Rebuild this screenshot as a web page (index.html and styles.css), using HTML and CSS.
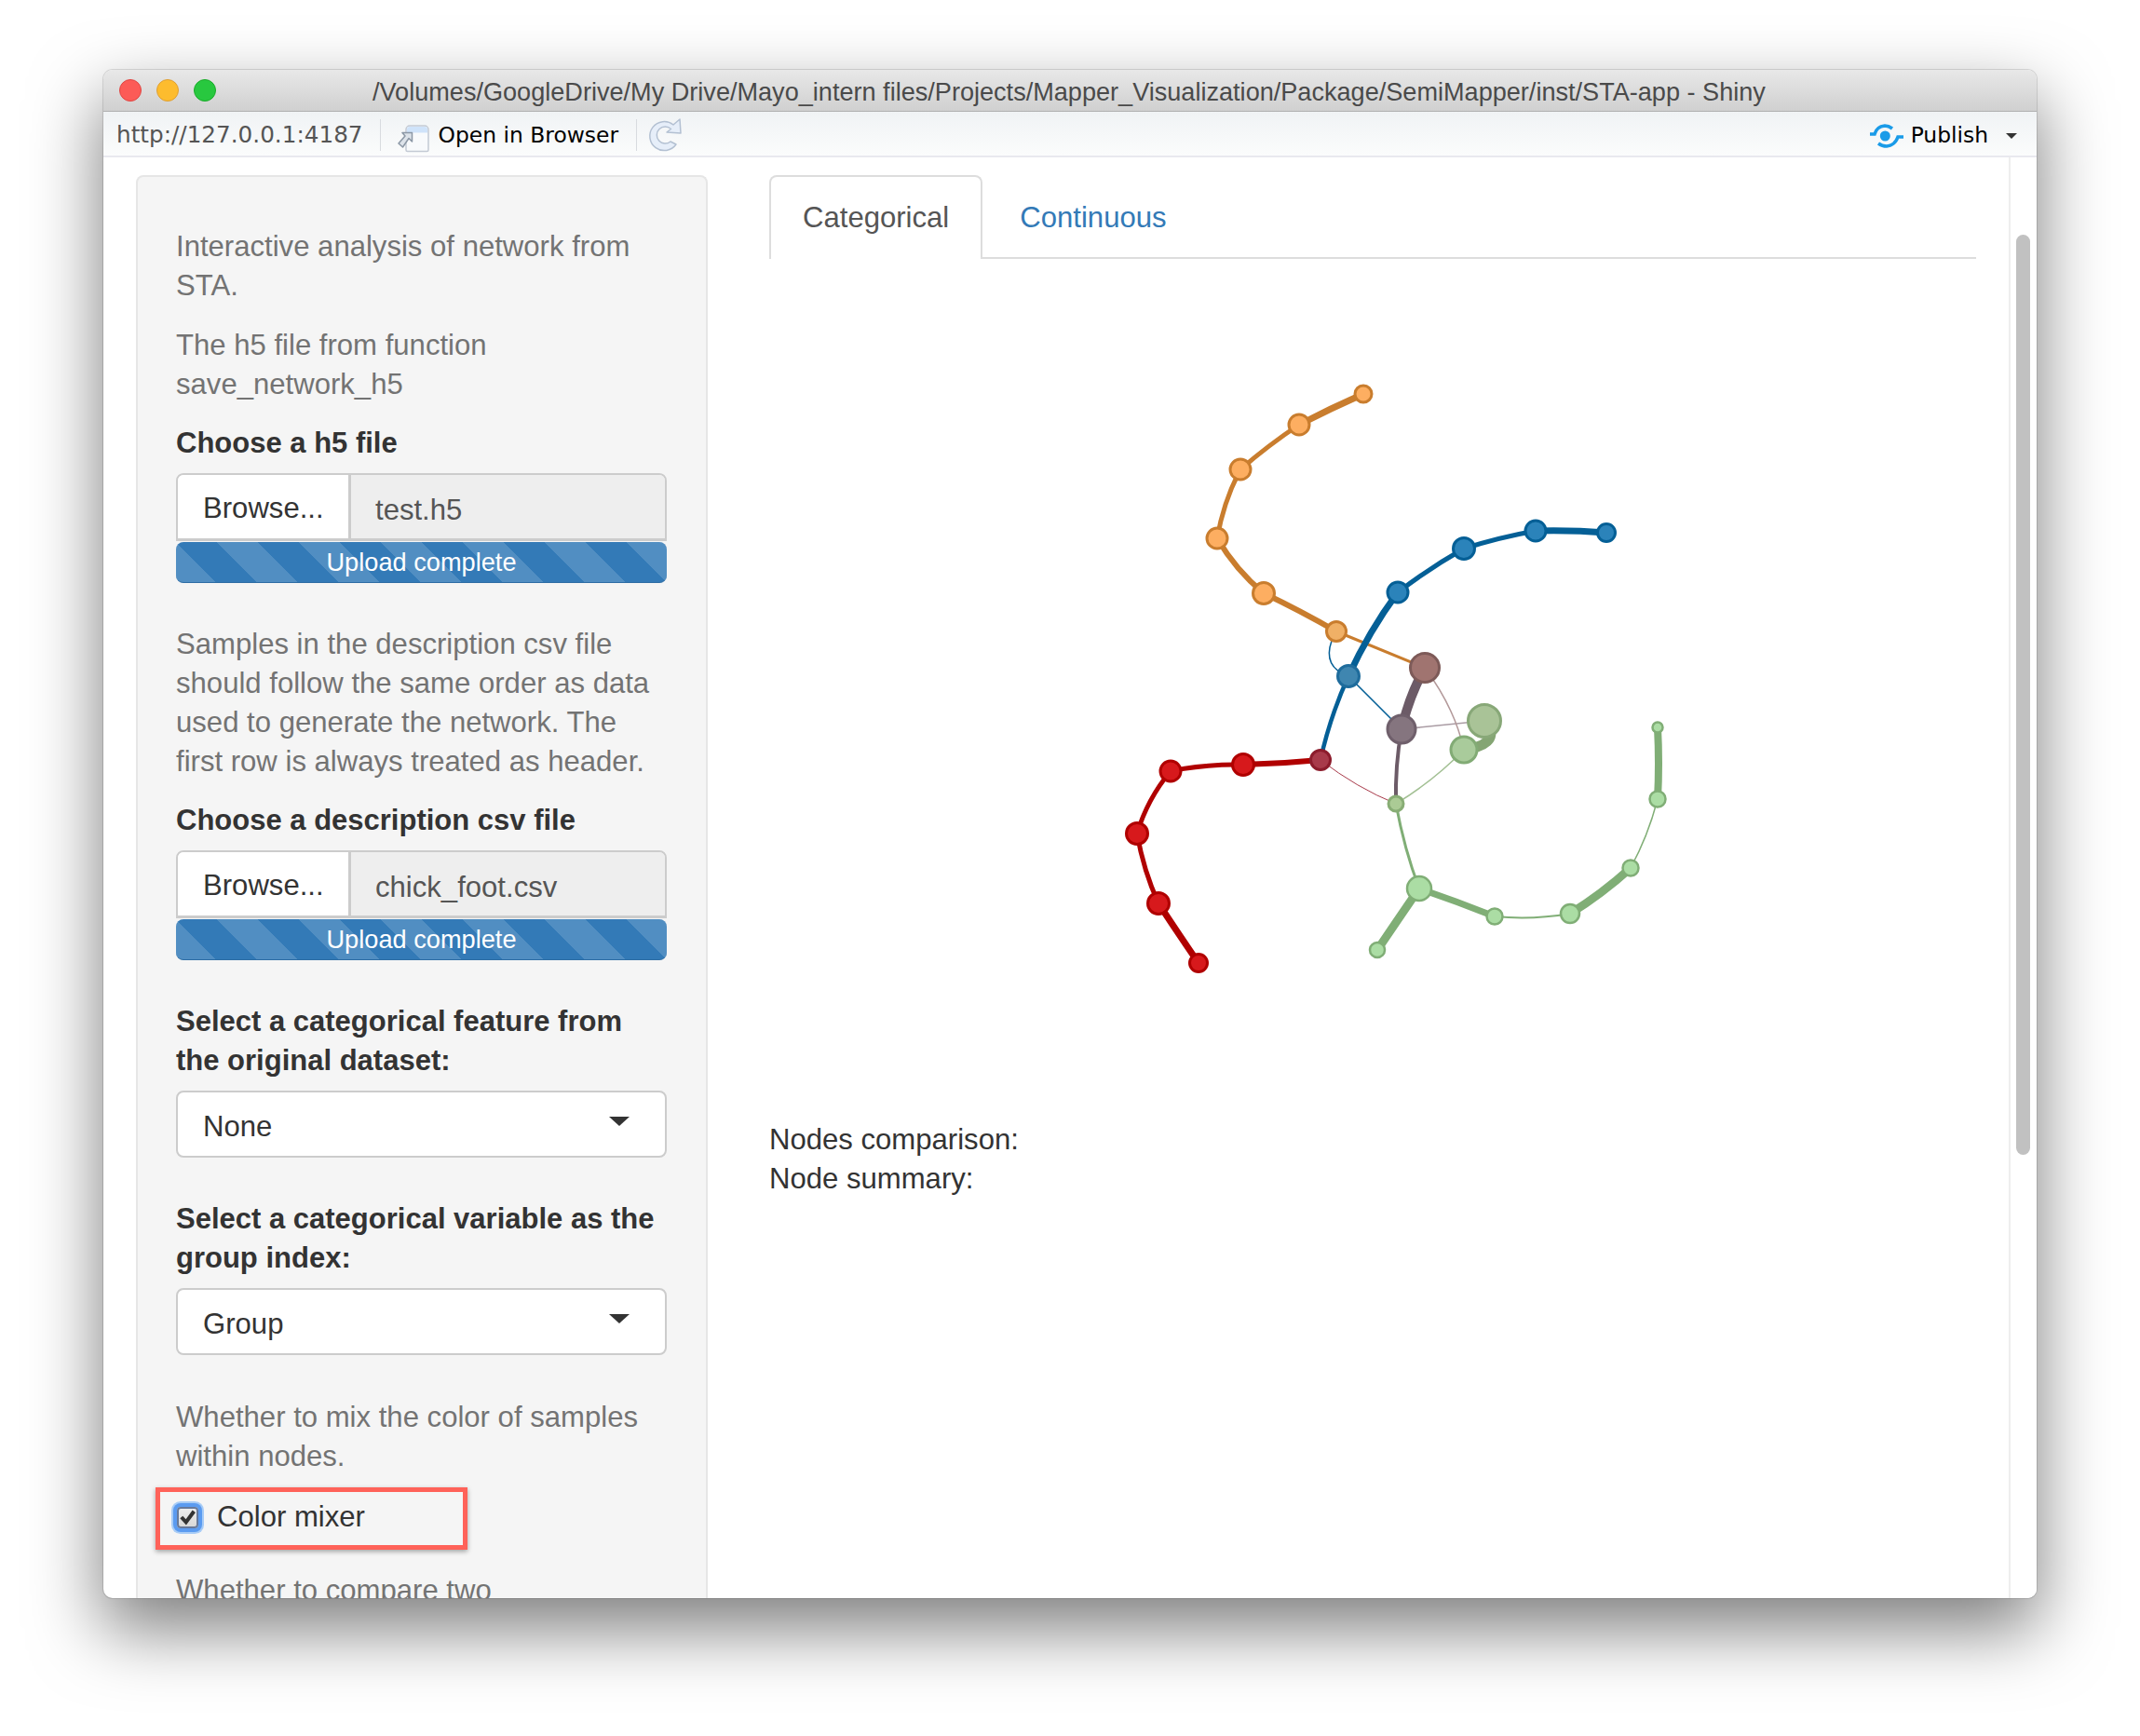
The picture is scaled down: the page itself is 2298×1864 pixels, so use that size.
FILE: index.html
```
<!DOCTYPE html>
<html lang="en">
<head>
    <meta charset="UTF-8">
    <meta name="viewport" content="width=device-width, initial-scale=1.0">
    <title>STA-app - Shiny</title>
    <link rel="stylesheet" href="styles.css">
</head>
<body>
<div class="window">
    <div class="titlebar">
        <span class="light light-red"></span>
        <span class="light light-yellow"></span>
        <span class="light light-green"></span>
        <div class="window-title">/Volumes/GoogleDrive/My Drive/Mayo_intern files/Projects/Mapper_Visualization/Package/SemiMapper/inst/STA-app - Shiny</div>
    </div>

    <div class="toolbar">
        <span class="url">http://127.0.0.1:4187</span>
        <span class="sep"></span>
        <svg class="icon-open" width="34" height="30" viewBox="5 13 34 30">
            <path d="M14 18 A4 4 0 0 1 18 14 H34 A4 4 0 0 1 38 18 V40 A1.500 1.500 0 0 1 36.500 41.500 H15.500 A1.500 1.500 0 0 1 14 40 Z" fill="#f8fafc" stroke="#c3cad4" stroke-width="1.500"/>
            <path d="M15 21.500 V18 A3 3 0 0 1 18 15 H34 A3 3 0 0 1 37 18 V21.500 Z" fill="#cfe3fa"/>
            <path d="M20.500 21.500 V31 L17 27.500 L10.500 37 L6 33 L13 25 L10 21.500 Z" fill="#dde3ea" stroke="#8c98a6" stroke-width="1.500" stroke-linejoin="round"/>
        </svg>
        <span class="tool-text">Open in Browser</span>
        <span class="sep sep-tight"></span>
        <svg class="icon-reload" width="40" height="40" viewBox="5 5 40 40">
            <path d="M34 14 L41 8 L42 23 L27 22 L31.500 18.500 A9 9 0 1 0 31 32 L37 35 A15.500 15.500 0 1 1 34 14 Z" fill="#e6eef9" stroke="#b3c0d2" stroke-width="1.500" stroke-linejoin="round"/>
        </svg>
        <span class="spacer"></span>
        <svg class="icon-publish" width="40" height="30" viewBox="5 10 40 30">
            <path d="M7 23 H12 Q14 15 23 14 Q27 14 31 17" fill="none" stroke="#1a9be8" stroke-width="3.500"/>
            <path d="M43 26 H37 Q34 35 25 36 Q20 36 16 33" fill="none" stroke="#1a9be8" stroke-width="3.500"/>
            <circle cx="23.300" cy="25" r="5.500" fill="#1a9be8"/>
        </svg>
        <span class="tool-text">Publish</span>
        <span class="publish-caret"></span>
    </div>

    <div class="content">
        <div class="sidebar">
            <p>Interactive analysis of network from STA.</p>
            <p>The h5 file from function save_network_h5</p>
            <label class="field-label">Choose a h5 file</label>
            <div class="file-input">
                <span class="browse">Browse...</span>
                <span class="file-name">test.h5</span>
            </div>
            <div class="progress">Upload complete</div>

            <p class="after-upload">Samples in the description csv file should follow the same order as data used to generate the network. The first row is always treated as header.</p>
            <label class="field-label">Choose a description csv file</label>
            <div class="file-input">
                <span class="browse">Browse...</span>
                <span class="file-name">chick_foot.csv</span>
            </div>
            <div class="progress">Upload complete</div>

            <label class="field-label after-group">Select a categorical feature from the original dataset:</label>
            <div class="select-box"><span class="select-value">None</span><span class="caret"></span></div>

            <label class="field-label after-group">Select a categorical variable as the group index:</label>
            <div class="select-box"><span class="select-value">Group</span><span class="caret"></span></div>

            <p class="after-group">Whether to mix the color of samples within nodes.</p>
            <div class="mixer">
                <span class="checkbox">
                    <svg width="18" height="18" viewBox="0 0 20 20">
                        <path d="M2 10 L7.500 16 L17 3" fill="none" stroke="#333" stroke-width="4.500"/>
                    </svg>
                </span>
                <span>Color mixer</span>
            </div>
            <p class="last-text">Whether to compare two</p>
        </div>

        <div class="main">
            <div class="tabs">
                <span class="tab tab-active">Categorical</span>
                <span class="tab">Continuous</span>
            </div>
            <div class="graph">
                <svg width="600" height="680" viewBox="1200 400 600 680" fill="none" stroke-linecap="round">
                    <!-- orange -->
                    <g stroke="#c97d2e">
                        <path d="M1464 423 Q1430 438 1395 456" stroke-width="7"/>
                        <path d="M1395 456 Q1362 478 1332 504" stroke-width="5"/>
                        <path d="M1332 504 Q1314 538 1307 578" stroke-width="5"/>
                        <path d="M1307 578 Q1327 612 1357 637" stroke-width="6"/>
                        <path d="M1357 637 Q1397 656 1435 678" stroke-width="6"/>
                        <path d="M1435 678 L1530 717" stroke-width="3"/>
                    </g>
                    <!-- blue -->
                    <g stroke="#045f96">
                        <path d="M1725 572 Q1688 569 1649 570" stroke-width="7"/>
                        <path d="M1649 570 Q1610 577 1572 589" stroke-width="5"/>
                        <path d="M1572 589 Q1535 610 1501 636" stroke-width="5"/>
                        <path d="M1501 636 Q1470 678 1448 726" stroke-width="7"/>
                        <path d="M1448 726 Q1428 770 1418 816" stroke-width="4.500"/>
                        <path d="M1430 688 Q1420 716 1448 726" stroke-width="1.500"/>
                        <path d="M1448 726 Q1478 756 1505 783" stroke-width="1.500"/>
                    </g>
                    <!-- red -->
                    <g stroke="#b00000">
                        <path d="M1418 816 Q1377 820 1335 821" stroke-width="6"/>
                        <path d="M1335 821 Q1295 820 1257 828" stroke-width="5"/>
                        <path d="M1257 828 Q1232 858 1221 895" stroke-width="5"/>
                        <path d="M1221 895 Q1228 935 1244 970" stroke-width="5"/>
                        <path d="M1244 970 Q1265 1002 1287 1034" stroke-width="7"/>
                    </g>
                    <path d="M1418 816 Q1457 846 1499 863" stroke="#a83a4a" stroke-width="1"/>
                    <!-- grey middle -->
                    <path d="M1530 717 Q1513 748 1505 783" stroke="#6c5b67" stroke-width="10"/>
                    <path d="M1505 783 Q1498 822 1499 863" stroke="#6c5b67" stroke-width="4"/>
                    <path d="M1505 783 L1594 774" stroke="#aa9ca4" stroke-width="1.500"/>
                    <path d="M1530 717 Q1562 760 1572 805" stroke="#b3999a" stroke-width="1.500"/>
                    <!-- green -->
                    <path d="M1499 863 Q1540 838 1572 805" stroke="#a3c094" stroke-width="1.500"/>
                    <path d="M1599 780 Q1608 800 1572 805" stroke="#84a573" stroke-width="11"/>
                    <g stroke="#80ae76">
                        <path d="M1499 863 Q1508 912 1524 954" stroke-width="3"/>
                        <path d="M1524 954 Q1502 986 1479 1020" stroke-width="9"/>
                        <path d="M1524 954 Q1565 968 1605 984" stroke-width="7"/>
                        <path d="M1605 984 Q1645 988 1686 981" stroke-width="2"/>
                        <path d="M1686 981 Q1720 960 1751 932" stroke-width="9"/>
                        <path d="M1751 932 Q1770 897 1780 858" stroke-width="1.500"/>
                        <path d="M1780 858 Q1782 820 1780 781" stroke-width="8"/>
                    </g>
                    <!-- nodes -->
                    <g stroke-width="3" fill="#fdae61" stroke="#c97d2e">
                        <circle cx="1464" cy="423" r="9"/>
                        <circle cx="1395" cy="456" r="11"/>
                        <circle cx="1332" cy="504" r="11"/>
                        <circle cx="1307" cy="578" r="11"/>
                        <circle cx="1357" cy="637" r="11.500"/>
                        <circle cx="1435" cy="678" r="10.500" fill="#f0b066"/>
                    </g>
                    <g stroke-width="3" fill="#2b83ba" stroke="#045f96">
                        <circle cx="1725" cy="572" r="9.500"/>
                        <circle cx="1649" cy="570" r="11"/>
                        <circle cx="1572" cy="589" r="11.500"/>
                        <circle cx="1501" cy="636" r="11"/>
                        <circle cx="1448" cy="726" r="11.500" fill="#3f86b0" stroke="#1f6c9c"/>
                    </g>
                    <g stroke-width="3" fill="#d7191c" stroke="#b00000">
                        <circle cx="1418" cy="816" r="10.500" fill="#a83a4a" stroke="#8c1c2c"/>
                        <circle cx="1335" cy="821" r="11.500"/>
                        <circle cx="1257" cy="828" r="11"/>
                        <circle cx="1221" cy="895" r="11.500"/>
                        <circle cx="1244" cy="970" r="11.500"/>
                        <circle cx="1287" cy="1034" r="9.500"/>
                    </g>
                    <g stroke-width="3">
                        <circle cx="1530" cy="717" r="15.500" fill="#a07470" stroke="#7d5a58"/>
                        <circle cx="1505" cy="783" r="15" fill="#85757f" stroke="#6f5f6b"/>
                        <circle cx="1594" cy="774" r="17.500" fill="#a9c397" stroke="#88a878"/>
                        <circle cx="1572" cy="805" r="14" fill="#a9cb9b" stroke="#82ab75"/>
                        <circle cx="1499" cy="863" r="8" fill="#abcb95" stroke="#88ad75"/>
                    </g>
                    <g stroke-width="2.500" fill="#abdda4" stroke="#80ae76">
                        <circle cx="1524" cy="954" r="13"/>
                        <circle cx="1479" cy="1020" r="8"/>
                        <circle cx="1605" cy="984" r="8.500"/>
                        <circle cx="1686" cy="981" r="10"/>
                        <circle cx="1751" cy="932" r="8.500"/>
                        <circle cx="1780" cy="858" r="8.500"/>
                        <circle cx="1780" cy="781" r="5.500"/>
                    </g>
                </svg>
            </div>
            <div class="summary">
                <div>Nodes comparison:</div>
                <div>Node summary:</div>
            </div>
        </div>

        <div class="scrollbar"><div class="thumb"></div></div>
    </div>
</div>
</body>
</html>
```

FILE: styles.css
```
html, body {
    margin: 0;
    background-color: #fff;
}
body {
    height: 1864px;
    overflow: hidden;
    padding: 75px 111px 0;
    box-sizing: border-box;
    font-family: "Liberation Sans", Arial, sans-serif;
    font-size: 31.1px;
    line-height: 42px;
    color: #333;
}
.window {
    height: 1641px;
    display: flex;
    flex-direction: column;
    border-radius: 10px;
    overflow: hidden;
    background-color: #fff;
    box-shadow: 0 32px 75px 2px rgba(0, 0, 0, 0.5), 0 0 0 1px rgba(0, 0, 0, 0.12);
}

/* title bar */
.titlebar {
    height: 45px;
    flex: none;
    box-sizing: border-box;
    display: flex;
    align-items: center;
    padding-left: 17px;
    gap: 16px;
    background: linear-gradient(#e8e8e8, #d0d0d0);
    border-bottom: 1px solid #b0b0b0;
}
.light {
    width: 24px;
    height: 24px;
    box-sizing: border-box;
    border-radius: 50%;
    flex: none;
}
.light-red { background-color: #fc5b57; border: 1px solid #df4744; }
.light-yellow { background-color: #fdbc2e; border: 1px solid #de9f34; }
.light-green { background-color: #28c83f; border: 1px solid #1aab29; }
.window-title {
    margin-left: 152px;
    padding-top: 2px;
    font-size: 27.1px;
    line-height: 43px;
    color: #4a4a4a;
    white-space: nowrap;
}

/* rstudio toolbar */
.toolbar {
    height: 49px;
    flex: none;
    box-sizing: border-box;
    display: flex;
    align-items: center;
    padding: 2px 14px 0;
    background: linear-gradient(#f0f3f5, #fbfcfc);
    border-bottom: 2px solid #e9e9ef;
    font-family: "DejaVu Sans", sans-serif;
    font-size: 23.4px;
}
.url { color: #555; font-size: 24.7px; }
.sep {
    width: 1px;
    height: 34px;
    background-color: #d8dbdf;
    margin: 0 18px;
}
.sep-tight { margin: 0 10px 0 19px; }
.icon-open { margin: 9px 10px 0 0; }
.tool-text { color: #000; }
.icon-reload { margin: 1px 0 0 0; }
.spacer { flex: 1; }
.icon-publish { margin: 3px 6px 0 0; }
.publish-caret {
    border-top: 6px solid #333;
    border-left: 6px solid transparent;
    border-right: 6px solid transparent;
    margin: 2px 7px 0 19px;
}

/* page */
.content {
    flex: 1;
    min-height: 0;
    display: flex;
    overflow: hidden;
}
.sidebar {
    width: 614px;
    flex: none;
    margin: 19px 0 0 35px;
    box-sizing: border-box;
    padding: 54px 44px 0 41px;
    background-color: #f5f5f5;
    border: 2px solid #e6e6e6;
    border-bottom: none;
    border-radius: 8px 8px 0 0;
    overflow: hidden;
}
.sidebar p {
    margin: 0 0 21px;
    color: #737373;
}
.sidebar p:first-child { margin-bottom: 22px; }
.sidebar p.after-upload { margin-top: 45px; }
.sidebar p.after-group { margin-top: 46px; }
.sidebar p.last-text { margin: 23px 0 0; white-space: nowrap; }
.field-label {
    display: block;
    font-weight: bold;
    font-size: 31px;
    color: #333;
    margin-bottom: 11px;
}
.field-label.after-group { margin-top: 45px; }
.file-input {
    display: flex;
    height: 73px;
    box-sizing: border-box;
    border: 2px solid #ccc;
    border-bottom-width: 3px;
    border-radius: 8px 8px 0 0;
    margin-right: -2px;
    overflow: hidden;
}
.browse {
    width: 186px;
    flex: none;
    box-sizing: border-box;
    padding: 15px 0 0 27px;
    background-color: #fff;
    border-right: 3px solid #ccc;
}
.file-name {
    flex: 1;
    padding: 17px 0 0 26px;
    background-color: #eee;
    color: #555;
}
.progress {
    height: 44px;
    margin: 1px -2px 0 0;
    border-radius: 8px;
    background-color: #337ab7;
    background-image: linear-gradient(45deg, rgba(255,255,255,.15) 25%, transparent 25%, transparent 50%, rgba(255,255,255,.15) 50%, rgba(255,255,255,.15) 75%, transparent 75%);
    background-size: 88px 88px;
    background-position: 44px 0;
    border-bottom: 1px solid #2e6da4;
    box-sizing: border-box;
    color: #fff;
    font-size: 27.2px;
    line-height: 44px;
    text-align: center;
}
.select-box {
    height: 72px;
    box-sizing: border-box;
    display: flex;
    align-items: center;
    justify-content: space-between;
    padding: 0 38px 0 27px;
    margin-right: -2px;
    background-color: #fff;
    border: 2px solid #ccc;
    border-radius: 8px;
}
.select-value { padding-top: 6px; }
.caret {
    border-top: 10px solid #333;
    border-left: 11px solid transparent;
    border-right: 11px solid transparent;
    margin-top: -6px;
}
.mixer {
    display: flex;
    align-items: center;
    gap: 20px;
    width: 335px;
    height: 67px;
    box-sizing: border-box;
    margin: -9px 0 0 -22px;
    padding: 0 0 3px 18px;
    border: 5px solid #ff6259;
    box-shadow: 0 2px 5px rgba(0, 0, 0, 0.35);
}
.checkbox {
    width: 23px;
    height: 23px;
    display: flex;
    align-items: center;
    justify-content: center;
    box-sizing: border-box;
    flex: none;
    background: linear-gradient(#ededed, #d8d8d8);
    border: 2px solid #67799a;
    border-radius: 4px;
    box-shadow: 0 0 0 4px #5b9bf0, 0 0 0 6px #a8ccf6;
}

/* main panel */
.main {
    flex: 1;
    min-width: 0;
    padding: 19px 35px 0 66px;
}
.tabs {
    display: flex;
    height: 90px;
    box-sizing: border-box;
    border-bottom: 2px solid #ddd;
    color: #337ab7;
}
.tab {
    padding: 25px 36px 0;
    margin-right: 4px;
}
.tab-active {
    height: 90px;
    box-sizing: border-box;
    color: #555;
    background-color: #fff;
    border: 2px solid #ddd;
    border-bottom: none;
    border-radius: 8px 8px 0 0;
    padding: 23px 34px 0;
}
.graph svg { display: block; margin-left: 374px; margin-top: 122px; }
.summary { margin-top: 123px; }
.scrollbar {
    width: 30px;
    flex: none;
    box-sizing: border-box;
    padding: 83px 7px 0 6px;
    background-color: #fff;
    border-left: 2px solid #eee;
}
.thumb {
    height: 988px;
    border-radius: 8px;
    background-color: #c1c1c1;
}
```
